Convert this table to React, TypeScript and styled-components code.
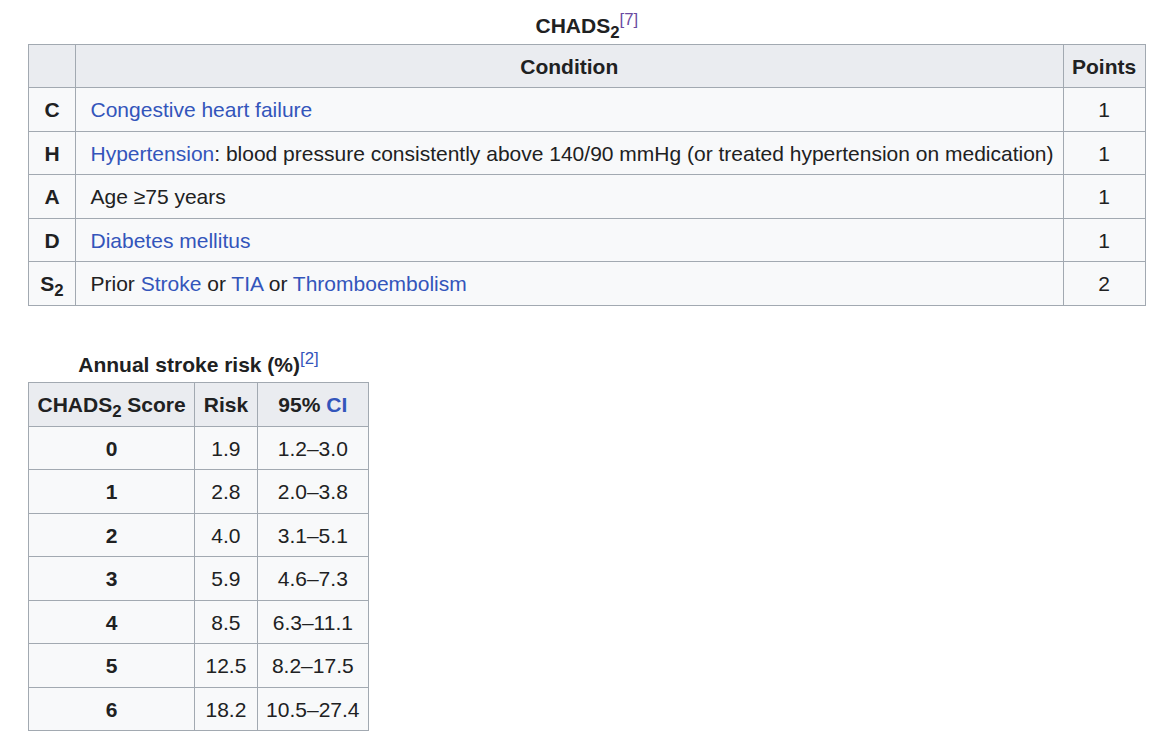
import React from "react";
import styled, { createGlobalStyle } from "styled-components";

const GlobalStyle = createGlobalStyle`
  html, body {
    margin: 0;
    padding: 0;
    background: #ffffff;
  }
  body {
    font-family: "Liberation Sans", Arial, sans-serif;
    color: #202122;
  }
`;

const Page = styled.div`
  padding: 8px 0 0 28px;
  width: max-content;
  font-size: 21px;
  line-height: 34.5px;
  display: flex;
  flex-direction: column;
  align-items: flex-start;
`;

const WikiTable = styled.table<{ $gapTop?: number }>`
  border-collapse: collapse;
  background: #f8f9fa;
  color: #202122;
  border: 1px solid #a2a9b1;
  margin-top: ${(p) => p.$gapTop ?? 0}px;
  font-size: inherit;
  line-height: inherit;
`;

const Caption = styled.caption`
  font-weight: bold;
  text-align: center;
  padding: 1px 0 0 0;
  white-space: nowrap;
`;

const HeadCell = styled.th<{ $width?: number }>`
  background: #eaecf0;
  border: 1px solid #a2a9b1;
  padding: 5px 8.5px 3px;
  font-weight: bold;
  text-align: center;
  white-space: nowrap;
  ${(p) => (p.$width ? `width: ${p.$width}px; box-sizing: border-box;` : "")}
`;

const RowHead = styled.th`
  border: 1px solid #a2a9b1;
  padding: 5px 8.5px 3px;
  font-weight: bold;
  text-align: center;
  white-space: nowrap;
`;

const Cell = styled.td<{ $align?: "left" | "center" | "right"; $wide?: boolean }>`
  border: 1px solid #a2a9b1;
  padding: ${(p) => (p.$wide ? "5px 9px 3px 14.5px" : "5px 8.5px 3px")};
  text-align: ${(p) => p.$align ?? "left"};
  white-space: nowrap;
`;

const Link = styled.a<{ $visited?: boolean }>`
  color: ${(p) => (p.$visited ? "#6b4ba1" : "#3355bb")};
  text-decoration: none;
`;

const Sup = styled.sup`
  font-size: 0.8em;
  font-weight: normal;
  line-height: 1;
  vertical-align: super;
`;

const Sub = styled.sub`
  font-size: 0.8em;
  line-height: 1;
  vertical-align: sub;
`;

type Condition = {
  letter: React.ReactNode;
  text: React.ReactNode;
  points: number;
};

const conditions: Condition[] = [
  {
    letter: "C",
    text: <Link href="#">Congestive heart failure</Link>,
    points: 1,
  },
  {
    letter: "H",
    text: (
      <>
        <Link href="#">Hypertension</Link>: blood pressure consistently above
        140/90 mmHg (or treated hypertension on medication)
      </>
    ),
    points: 1,
  },
  { letter: "A", text: "Age ≥75 years", points: 1 },
  {
    letter: "D",
    text: <Link href="#">Diabetes mellitus</Link>,
    points: 1,
  },
  {
    letter: (
      <>
        S<Sub>2</Sub>
      </>
    ),
    text: (
      <>
        Prior <Link href="#">Stroke</Link> or <Link href="#">TIA</Link> or{" "}
        <Link href="#">Thromboembolism</Link>
      </>
    ),
    points: 2,
  },
];

const risks: [number, string, string][] = [
  [0, "1.9", "1.2–3.0"],
  [1, "2.8", "2.0–3.8"],
  [2, "4.0", "3.1–5.1"],
  [3, "5.9", "4.6–7.3"],
  [4, "8.5", "6.3–11.1"],
  [5, "12.5", "8.2–17.5"],
  [6, "18.2", "10.5–27.4"],
];

export default function App() {
  return (
    <>
      <GlobalStyle />
      <Page>
        <WikiTable>
          <Caption>
            CHADS<Sub>2</Sub>
            <Sup>
              <Link href="#" $visited>
                [7]
              </Link>
            </Sup>
          </Caption>
          <thead>
            <tr>
              <HeadCell $width={47} />
              <HeadCell>Condition</HeadCell>
              <HeadCell>Points</HeadCell>
            </tr>
          </thead>
          <tbody>
            {conditions.map((c, i) => (
              <tr key={i}>
                <RowHead>{c.letter}</RowHead>
                <Cell $wide>{c.text}</Cell>
                <Cell $align="center">{c.points}</Cell>
              </tr>
            ))}
          </tbody>
        </WikiTable>

        <WikiTable $gapTop={41}>
          <Caption>
            Annual stroke risk (%)
            <Sup>
              <Link href="#">[2]</Link>
            </Sup>
          </Caption>
          <thead>
            <tr>
              <HeadCell>
                CHADS<Sub>2</Sub> Score
              </HeadCell>
              <HeadCell>Risk</HeadCell>
              <HeadCell>
                95% <Link href="#">CI</Link>
              </HeadCell>
            </tr>
          </thead>
          <tbody>
            {risks.map(([score, risk, ci]) => (
              <tr key={score}>
                <RowHead>{score}</RowHead>
                <Cell $align="center">{risk}</Cell>
                <Cell $align="center">{ci}</Cell>
              </tr>
            ))}
          </tbody>
        </WikiTable>
      </Page>
    </>
  );
}
